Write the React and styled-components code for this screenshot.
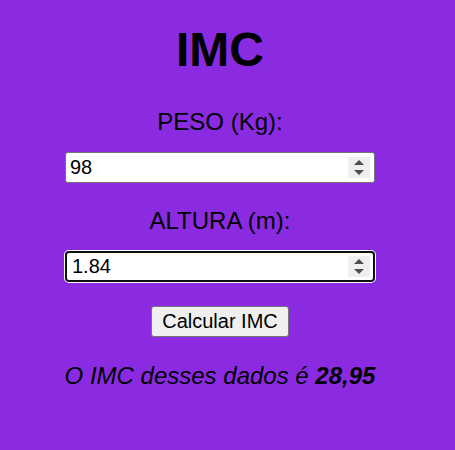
import React from "react";
import styled, { createGlobalStyle } from "styled-components";

const Global = createGlobalStyle`
  html, body { margin: 0; padding: 0; }
  body {
    background: #8a2be2;
    font-family: "Liberation Sans", Arial, sans-serif;
    color: #000;
  }
`;

const Page = styled.main`
  display: flex;
  flex-direction: column;
  align-items: center;
  padding-top: 22px;
  width: 440px;
`;

const Title = styled.h1`
  margin: 0 0 31px;
  font-size: 48px;
  font-weight: 700;
  line-height: 55px;
`;

const Label = styled.label`
  font-size: 24px;
  line-height: 28px;
  margin-bottom: 16px;
`;

const FieldWrap = styled.div`
  position: relative;
  width: 310px;
  height: 31px;
  margin-bottom: ${(p) => p.$gap}px;
`;

const Field = styled.input`
  box-sizing: border-box;
  width: 100%;
  height: 100%;
  margin: 0;
  padding: 1px 30px 1px ${(p) => (p.$focused ? "5px" : "4px")};
  font-family: "Liberation Sans", Arial, sans-serif;
  font-size: 20px;
  color: #000;
  background: #fff;
  border: ${(p) => (p.$focused ? "2px solid #101010" : "1px solid #767676")};
  border-radius: ${(p) => (p.$focused ? "4px" : "3px")};
  box-shadow: ${(p) => (p.$focused ? "0 0 0 1px #fff" : "none")};
  outline: none;
  -moz-appearance: textfield;
  &::-webkit-inner-spin-button,
  &::-webkit-outer-spin-button {
    -webkit-appearance: none;
    margin: 0;
  }
`;

const Spinner = styled.span`
  position: absolute;
  right: 5px;
  top: 5px;
  width: 22px;
  height: 21px;
  background: #efefef;
  display: flex;
  flex-direction: column;
  align-items: center;
  justify-content: center;
  gap: 5px;
  pointer-events: none;
`;

const Button = styled.button`
  box-sizing: border-box;
  height: 31px;
  padding: 3px 10px;
  font-family: "Liberation Sans", Arial, sans-serif;
  font-size: 20px;
  color: #000;
  background: #efefef;
  border: 1px solid #767676;
  border-radius: 3px;
  margin-bottom: 25px;
`;

const Result = styled.p`
  margin: 0;
  font-size: 24px;
  line-height: 28px;
  font-style: italic;
`;

function Arrows() {
  return (
    <Spinner>
      <svg width="10" height="5" viewBox="0 0 10 5">
        <polygon points="5,0 10,5 0,5" fill="#4f4f4f" />
      </svg>
      <svg width="10" height="5" viewBox="0 0 10 5">
        <polygon points="0,0 10,0 5,5" fill="#4f4f4f" />
      </svg>
    </Spinner>
  );
}

export default function App() {
  return (
    <>
      <Global />
      <Page>
        <Title>IMC</Title>
        <Label htmlFor="peso">PESO (Kg):</Label>
        <FieldWrap $gap={24}>
          <Field id="peso" type="number" defaultValue="98" />
          <Arrows />
        </FieldWrap>
        <Label htmlFor="altura">ALTURA (m):</Label>
        <FieldWrap $gap={24}>
          <Field id="altura" type="number" defaultValue="1.84" step="0.01" $focused />
          <Arrows />
        </FieldWrap>
        <Button type="button">Calcular IMC</Button>
        <Result>
          O IMC desses dados é <b>28,95</b>
        </Result>
      </Page>
    </>
  );
}
